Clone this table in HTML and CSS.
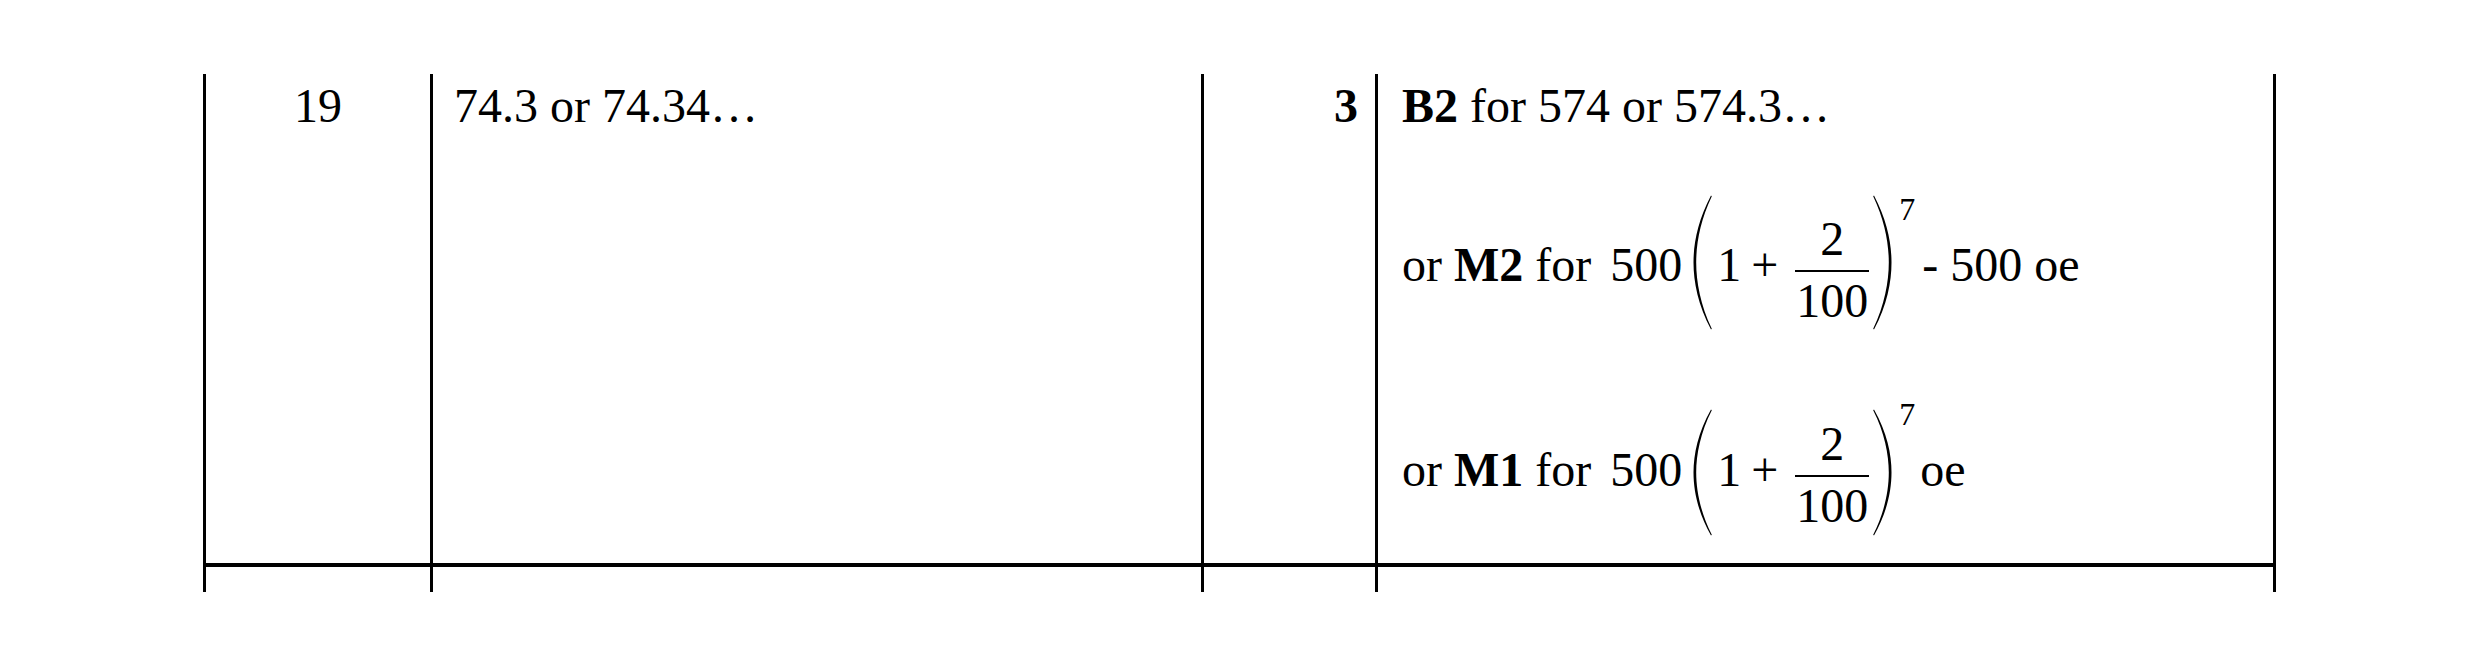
FILE: index.html
```html
<!DOCTYPE html>
<html lang="en">
<head>
<meta charset="utf-8">
<title>Mark scheme row</title>
<link rel="stylesheet" href="styles.css">
</head>
<body>
<div class="page">
  <div class="table">
    <div class="cell r1 qnum">19</div>
    <div class="cell r1 answer">74.3 or 74.34…</div>
    <div class="cell r1 marks"><b>3</b></div>
    <div class="cell r1 last notes">
      <div class="line">
        <b>B2</b> for 574 or 574.3…
      </div>
      <div class="line mline m2">
        or <b>M2</b> for <span class="math"><span class="n500">500</span><svg class="paren pl" viewBox="0 0 22 135" width="22" height="135" preserveAspectRatio="none" aria-hidden="true"><path d="M20,0.5 C7,25 2.5,48 2.5,67.5 C2.5,87 7,110 20,134.5 L20.8,133.8 C9.5,110 5.2,87 5.2,67.5 C5.2,48 9.5,25 20.8,1.2 Z"/></svg><span class="one">1</span><span class="plus">+</span><span class="frac"><span class="num">2</span><span class="den">100</span></span><svg class="paren pr" viewBox="0 0 22 135" width="22" height="135" preserveAspectRatio="none" aria-hidden="true"><path d="M2,0.5 C15,25 19.5,48 19.5,67.5 C19.5,87 15,110 2,134.5 L1.2,133.8 C12.5,110 16.8,87 16.8,67.5 C16.8,48 12.5,25 1.2,1.2 Z"/></svg><span class="exp">7</span><span class="tail">- 500 oe</span></span>
      </div>
      <div class="line mline m3">
        or <b>M1</b> for <span class="math"><span class="n500">500</span><svg class="paren pl" viewBox="0 0 22 135" width="22" height="135" preserveAspectRatio="none" aria-hidden="true"><path d="M20,0.5 C7,25 2.5,48 2.5,67.5 C2.5,87 7,110 20,134.5 L20.8,133.8 C9.5,110 5.2,87 5.2,67.5 C5.2,48 9.5,25 20.8,1.2 Z"/></svg><span class="one">1</span><span class="plus">+</span><span class="frac"><span class="num">2</span><span class="den">100</span></span><svg class="paren pr" viewBox="0 0 22 135" width="22" height="135" preserveAspectRatio="none" aria-hidden="true"><path d="M2,0.5 C15,25 19.5,48 19.5,67.5 C19.5,87 15,110 2,134.5 L1.2,133.8 C12.5,110 16.8,87 16.8,67.5 C16.8,48 12.5,25 1.2,1.2 Z"/></svg><span class="exp">7</span><span class="tail oe">oe</span></span>
      </div>
    </div>
    <div class="cell"></div>
    <div class="cell"></div>
    <div class="cell"></div>
    <div class="cell last"></div>
  </div>
</div>
</body>
</html>
```

FILE: styles.css
```css
html, body {
  margin: 0;
  background: #ffffff;
}

body {
  font-family: "Liberation Serif", "Times New Roman", serif;
  font-size: 48px;
  line-height: 56px;
  color: #000000;
}

.page {
  padding: 74px 0 0 203px;
}

.table {
  display: grid;
  grid-template-columns: 227px 771px 174px 901px;
  grid-template-rows: 493px 25px;
  width: 2073px;
}

.cell {
  box-sizing: border-box;
  border-left: 3px solid #000000;
}

.cell.last {
  border-right: 3px solid #000000;
}

.r1 {
  border-bottom: 4px solid #000000;
  padding-top: 4px;
}

.qnum {
  text-align: center;
}

.answer {
  padding-left: 21px;
}

.marks {
  text-align: right;
  padding-right: 17px;
}

.notes {
  padding-left: 24px;
}

.line {
  white-space: nowrap;
}

.m2 {
  margin-top: 61px;
}

.m3 {
  margin-top: 79px;
}

.math {
  margin-left: 7px;
}

.paren {
  display: inline-block;
  vertical-align: -49px;
  fill: #000000;
}

.m3 .paren {
  height: 127px;
  vertical-align: -50px;
}

.pl {
  margin-left: 9px;
  margin-right: 4px;
}

.pr {
  margin-left: 3px;
}

.plus {
  margin-left: 10px;
  margin-right: 17px;
}

.frac {
  display: inline-block;
  vertical-align: -36px;
  text-align: center;
}

.num {
  display: block;
  line-height: 40px;
  padding: 0 1px 11px;
  border-bottom: 2px solid #000000;
}

.den {
  display: block;
  line-height: 40px;
  padding: 9px 1px 0;
}

.exp {
  font-size: 32px;
  line-height: 0;
  vertical-align: 61px;
  margin-left: 5px;
}

.tail {
  margin-left: 7px;
}

.tail.oe {
  margin-left: 5px;
}
```
